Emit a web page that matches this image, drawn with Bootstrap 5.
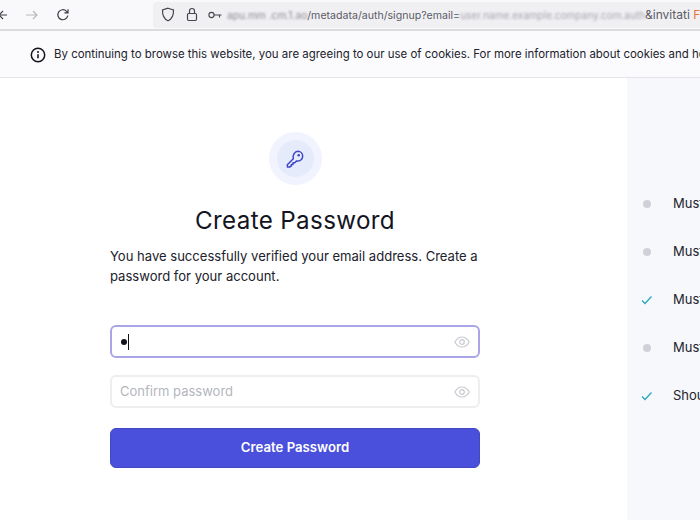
<!DOCTYPE html>
<html lang="en">
<head>
<meta charset="utf-8">
<title>Create Password</title>
<link href="https://cdn.jsdelivr.net/npm/bootstrap@5.3.0/dist/css/bootstrap.min.css" rel="stylesheet">
<style>
html,body{height:100%;overflow:hidden}
body{font-family:Inter,"Liberation Sans",sans-serif;color:#1a1b25;background:#fff;width:700px;height:520px}
.bar-top{height:31px;background:#f9f9fb;border-bottom:2px solid #dcdce0;padding-left:0}
.nav-ico{flex:none;display:block}
.url-box{background:#f0f0f3;height:26px;width:547px;border-radius:4px 0 0 4px;font-size:10.6px;color:#5b5b66;white-space:nowrap;overflow:hidden;padding-left:8px}
.blurred{filter:blur(.8px);color:#8a8a92;font-size:10.2px}
.blurred-more{filter:blur(1.2px);color:#a5a5ad;font-size:10px}
.url-end{font-size:12px}
.notice{height:47px;background:#fbfbfd;border-bottom:1px solid #e3e5ea;font-size:11.44px;white-space:nowrap;overflow:hidden;padding:2px 0 0 30px;color:#20212b}
.main-area{height:442px}
.form-side{width:627px;flex:none;padding:54px 0 0 110px}
.form-wrap{width:370px}
.halo{width:53px;height:53px;border-radius:50%;background:#f1f3fe}
.halo-in{width:37px;height:37px;border-radius:50%;background:#e6ebfc}
.ttl{font-size:24.2px;font-weight:400;letter-spacing:.35px;color:#14151f;margin:21px 0 11px}
.intro{font-size:13.05px;line-height:20px;margin-bottom:39px;color:#20212b}
.pw-field{height:33px;border-radius:6px;background:#fff;padding:0 8px;font-size:13px}
.pw-focus{border:2px solid #aaa5e6;margin-bottom:17px}
.pw-idle{border:2px solid #eeeef1;margin-bottom:20px;color:#b4b6bd}
.dot-val{width:6px;height:6px;border-radius:50%;background:#12131a;margin-left:1px}
.caret{width:1px;height:16px;background:#12131a;margin-left:1px}
.btn-make{background:#4a50dc;border:1px solid #4347c4;border-radius:6px;color:#fff;font-size:13.2px;font-weight:600;height:40px;width:100%}
.btn-make:hover{background:#4a50dc;color:#fff;border-color:#4347c4}
.rules-side{flex:1;background:#f7f8fc;padding:102px 0 0 16px;overflow:hidden;white-space:nowrap;font-size:13px;color:#22232d}
.rule-row{height:48px}
.rule-mark{width:30px;flex:none}
.rule-dot{width:8px;height:8px;border-radius:50%;background:#d0d1d8}
.ico-fwd{margin-left:15px}
.ico-reload{margin-left:18px}
.url-gap{margin-left:83px}
.ico-lock{margin-left:11px}
.ico-key{margin-left:10px}
.url-text{margin-left:5px}
.url-tail{color:#e8743b}
.check-ico{margin-left:-2px}
.ico-back{margin-left:-1px}
</style>
</head>
<body>
<div class="bar-top d-flex align-items-center">
  <svg class="nav-ico ico-back" width="12" height="14" viewBox="0 0 12 14"><path d="M8 7H0M4 3 0 7l4 4" fill="none" stroke="#3b3b45" stroke-width="1.2"/></svg>
  <svg class="nav-ico ico-fwd" width="12" height="14" viewBox="0 0 12 14"><path d="M0 7h11M7 3l4 4-4 4" fill="none" stroke="#b9b9bf" stroke-width="1.2"/></svg>
  <svg class="nav-ico ico-reload" width="14" height="14" viewBox="0 0 14 14"><path d="M11.8 7.5A5 5 0 1 1 10.5 3.3L12 4.8M12 1.2v3.6H8.4" fill="none" stroke="#3b3b45" stroke-width="1.2"/></svg>
  <div class="url-box url-gap d-flex align-items-center">
    <svg class="nav-ico" width="14" height="15" viewBox="0 0 14 15"><path d="M7 1.2 12.500 3c.2 5-1.200 8.800-5.500 10.800C2.700 11.800 1.300 8 1.500 3z" fill="none" stroke="#45454f" stroke-width="1.2"/></svg>
    <svg class="nav-ico ico-lock" width="12" height="15" viewBox="0 0 12 15"><rect x="1.5" y="6.5" width="9" height="7" rx="1.2" fill="none" stroke="#45454f" stroke-width="1.2"/><path d="M3.5 6.5V4a2.500 2.500 0 0 1 5 0v2.500" fill="none" stroke="#45454f" stroke-width="1.2"/></svg>
    <svg class="nav-ico ico-key" width="14" height="8" viewBox="0 0 14 8"><circle cx="3.5" cy="4" r="2.6" fill="none" stroke="#45454f" stroke-width="1.1"/><path d="M6 4h7.500M11.500 4v2.500" fill="none" stroke="#45454f" stroke-width="1.1"/></svg>
    <span class="url-text"><span class="blurred">apu.mm .cm.1.ao</span>/metadata/auth/signup?email=<span class="blurred-more">user.name.example.company.com.auth</span><span class="url-end">&amp;invitati <span class="url-tail">F</span></span></span>
  </div>
</div>
<div class="notice d-flex align-items-center">
  <svg class="nav-ico me-2" width="16" height="16" viewBox="0 0 16 16"><circle cx="8" cy="8" r="6.7" fill="none" stroke="#14151f" stroke-width="1.5"/><path d="M8 7.2v4" stroke="#14151f" stroke-width="1.6"/><circle cx="8" cy="4.9" r="1" fill="#14151f"/></svg>
  <span>By continuing to browse this website, you are agreeing to our use of cookies. For more information about cookies and how to manage them</span>
</div>
<div class="main-area d-flex">
  <div class="form-side">
    <div class="form-wrap">
      <div class="d-flex justify-content-center">
        <div class="halo d-flex align-items-center justify-content-center">
          <div class="halo-in d-flex align-items-center justify-content-center">
            <svg width="20" height="20" viewBox="0 0 20 20"><path d="M12.800 2.200a5 5 0 0 1 4.900 5c0 2.900-3 5.600-6 4.700l-1.900 1.900H8v1.700H6.300v1.500L4.600 18 2.500 18.100 2.300 15.700l6-6c-.9-3.500 1.500-7.500 4.500-7.500z" fill="none" stroke="#3f46c8" stroke-width="1.5" stroke-linejoin="round"/><circle cx="13.7" cy="6.2" r="1.3" fill="#3f46c8"/></svg>
          </div>
        </div>
      </div>
      <h1 class="ttl text-center">Create Password</h1>
      <p class="intro">You have successfully verified your email address. Create a password for your account.</p>
      <div class="pw-field pw-focus d-flex align-items-center">
        <span class="dot-val"></span><span class="caret"></span>
        <svg class="ms-auto" width="16" height="12" viewBox="0 0 16 12"><path d="M.8 6C2.600 2.800 5 1 8 1s5.400 1.800 7.200 5C13.400 9.200 11 11 8 11S2.600 9.200.8 6z" fill="none" stroke="#c9cad0" stroke-width="1.2"/><circle cx="8" cy="6" r="2.3" fill="none" stroke="#c9cad0" stroke-width="1.2"/></svg>
      </div>
      <div class="pw-field pw-idle d-flex align-items-center">
        <span>Confirm password</span>
        <svg class="ms-auto" width="16" height="12" viewBox="0 0 16 12"><path d="M.8 6C2.600 2.800 5 1 8 1s5.400 1.800 7.200 5C13.400 9.200 11 11 8 11S2.600 9.200.8 6z" fill="none" stroke="#c9cad0" stroke-width="1.2"/><circle cx="8" cy="6" r="2.3" fill="none" stroke="#c9cad0" stroke-width="1.2"/></svg>
      </div>
      <button type="button" class="btn btn-make">Create Password</button>
    </div>
  </div>
  <div class="rules-side">
    <div class="rule-row d-flex align-items-center"><span class="rule-mark"><span class="rule-dot d-block"></span></span>Must be at least 8 characters</div>
    <div class="rule-row d-flex align-items-center"><span class="rule-mark"><span class="rule-dot d-block"></span></span>Must contain a number</div>
    <div class="rule-row d-flex align-items-center"><span class="rule-mark"><svg class="d-block check-ico" width="12" height="10" viewBox="0 0 12 10"><path d="M1 5.5 4 8.5 10.5 1.5" fill="none" stroke="#2aa6bd" stroke-width="1.3"/></svg></span>Must contain a lowercase letter</div>
    <div class="rule-row d-flex align-items-center"><span class="rule-mark"><span class="rule-dot d-block"></span></span>Must contain an uppercase letter</div>
    <div class="rule-row d-flex align-items-center"><span class="rule-mark"><svg class="d-block check-ico" width="12" height="10" viewBox="0 0 12 10"><path d="M1 5.5 4 8.5 10.5 1.5" fill="none" stroke="#2aa6bd" stroke-width="1.3"/></svg></span>Should contain a symbol</div>
  </div>
</div>
<script src="https://cdn.jsdelivr.net/npm/bootstrap@5.3.0/dist/js/bootstrap.bundle.min.js"></script>
</body>
</html>
